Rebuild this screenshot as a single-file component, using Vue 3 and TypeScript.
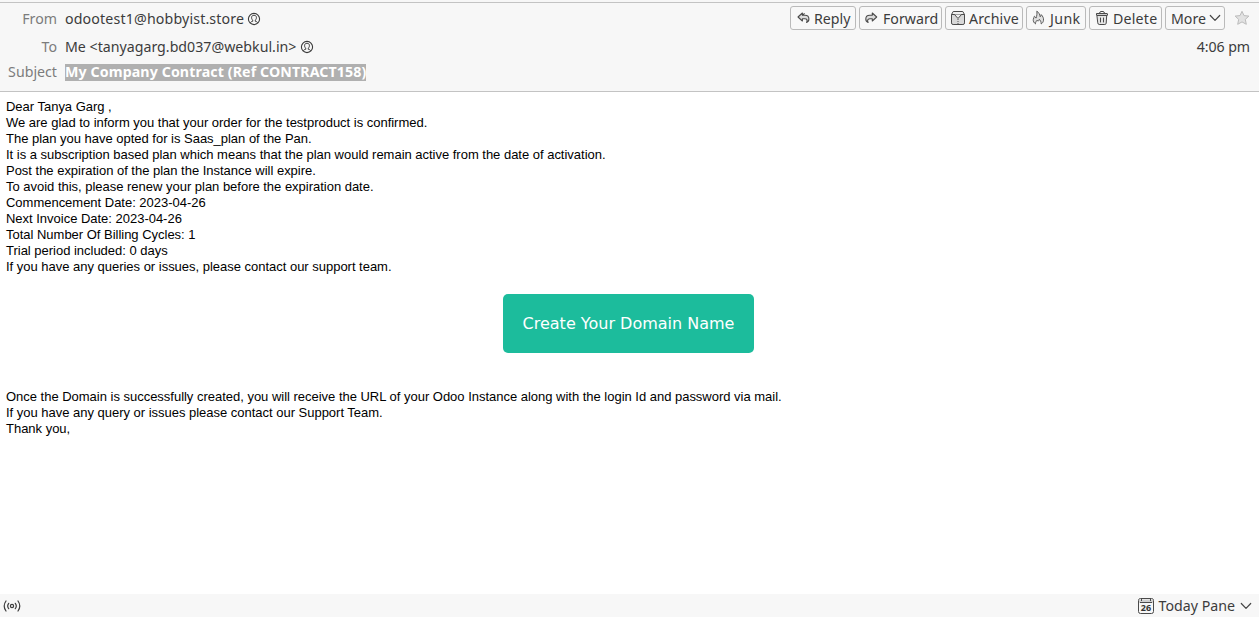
<script setup lang="ts">
interface Action {
  id: string
  label: string
}

const actions: Action[] = [
  { id: 'reply', label: 'Reply' },
  { id: 'forward', label: 'Forward' },
  { id: 'archive', label: 'Archive' },
  { id: 'junk', label: 'Junk' },
  { id: 'delete', label: 'Delete' },
  { id: 'more', label: 'More' },
]

const intro: string[] = [
  'Dear Tanya Garg ,',
  'We are glad to inform you that your order for the testproduct is confirmed.',
  'The plan you have opted for is Saas_plan of the Pan.',
  'It is a subscription based plan which means that the plan would remain active from the date of activation.',
  'Post the expiration of the plan the Instance will expire.',
  'To avoid this, please renew your plan before the expiration date.',
  'Commencement Date: 2023-04-26',
  'Next Invoice Date: 2023-04-26',
  'Total Number Of Billing Cycles: 1',
  'Trial period included: 0 days',
  'If you have any queries or issues, please contact our support team.',
]

const closing: string[] = [
  'Once the Domain is successfully created, you will receive the URL of your Odoo Instance along with the login Id and password via mail.',
  'If you have any query or issues please contact our Support Team.',
  'Thank you,',
]

const people = [
  { id: 'from', label: 'From', value: 'odootest1@hobbyist.store' },
  { id: 'to', label: 'To', value: 'Me <tanyagarg.bd037@webkul.in>' },
]
</script>

<template>
  <div class="window">
    <header class="head">
      <div class="fields">
        <div v-for="p in people" :key="p.id" class="field" :class="p.id">
          <span class="label">{{ p.label }}</span>
          <span class="value">{{ p.value }}</span>
          <svg class="contact" width="14" height="14" viewBox="0 0 14 14" fill="none" stroke="#3c3c3c">
            <circle cx="7" cy="7" r="5.6" stroke-width="1.1" />
            <path d="M3.400 10.800c.3-.9 1-1.300 2.300-1.500V8.100C4.800 7.300 4.500 6.300 4.600 5.300 4.700 3.900 5.600 3.300 7 3.300s2.300.6 2.400 2c.1 1-.2 2-1.100 2.800v1.200c1.300.2 2 .6 2.300 1.500" />
          </svg>
        </div>
        <div class="field subject">
          <span class="label">Subject</span>
          <span class="value">My Company Contract (Ref CONTRACT158)</span>
        </div>
      </div>
      <div class="side">
        <div class="toolbar">
          <button v-for="a in actions" :key="a.id" type="button" class="btn" :class="a.id">
            <svg v-if="a.id === 'reply'" class="ic" width="16" height="16" viewBox="0 0 16 16" fill="#dcdcdc" stroke="#4a4a4a" stroke-width="1.100" stroke-linejoin="round">
              <path d="M6.400 3 2 7l4.400 4V8.800h2.400c1.600 0 2.300.7 2.300 1.900 0 .6-.2 1-.5 1.700 1.600-.5 2.300-1.700 2.300-3.400C12.900 6.500 11.400 5.300 9 5.300H6.400zM6.200 5.500 8.600 3.300" />
            </svg>
            <svg v-else-if="a.id === 'forward'" class="ic" width="16" height="16" viewBox="0 0 16 16" fill="#dcdcdc" stroke="#4a4a4a" stroke-width="1.100" stroke-linejoin="round">
              <path d="M8.300 3l4.400 4-4.400 4V8.800H5.900c-1.600 0-2.300.7-2.300 1.900 0 .6.2 1 .5 1.700-1.600-.5-2.300-1.700-2.300-3.400 0-2.500 1.500-3.700 3.900-3.700h2.600z" />
            </svg>
            <svg v-else-if="a.id === 'archive'" class="ic" width="16" height="16" viewBox="0 0 16 16" fill="none" stroke="#4a4a4a" stroke-linejoin="round">
              <path d="M1.500 4.500v8.400q0 1.600 1.600 1.600h9.800q1.600 0 1.600-1.600V4.500z" fill="#d8d8d8" />
              <path d="M1.500 4.500 3.200 1.500h9.600l1.700 3z" fill="#efefef" />
              <path d="M4.500 4.500 8 8.500l3.500-4" fill="#efefef" />
              <path d="M8 9v5" stroke="#555" stroke-dasharray="1 1" />
            </svg>
            <svg v-else-if="a.id === 'junk'" class="ic" width="16" height="16" viewBox="0 0 16 16" fill="#dedede" stroke="#5c5c5c" stroke-linejoin="round">
              <path d="M4.500 13.900C2.900 12.800 2 11.200 2.300 9.400c.2-1.300.8-2.100 1.100-3.200.9.500 1.300 1.100 1.600 1.900.9-2 1.200-4.500.8-6.900 2 1.200 3.100 3.200 3.400 5.600.6-.5.9-1.200 1-2.200 1.600 1.600 2.600 3.700 2.300 5.700-.2 1.600-1 2.800-2.300 3.600 0-2.200-.8-3.500-1.900-4.600-.3 1-.6 1.400-1.200 1.900-.4-.4-.6-.7-.7-1.200-1.300 1.200-2 2.300-1.900 3.900z" />
            </svg>
            <svg v-else-if="a.id === 'delete'" class="ic" width="16" height="16" viewBox="0 0 16 16" fill="none" stroke="#4a4a4a" stroke-linejoin="round" stroke-linecap="round">
              <path d="M3.300 5.500h9.400l-.5 7.700q-.2 1.300-1.400 1.300H5.200q-1.200 0-1.400-1.300z" fill="#e4e4e4" />
              <path d="M3 3.500h10q.5 0 .5.500v1q0 .5-.5.500H3Q2.500 5.500 2.500 5V4q0-.5.500-.5z" fill="#ccc" />
              <path d="M5.500 3.300q0-1.800 1.500-1.800h2q1.500 0 1.500 1.800M6.500 8v4M9.500 8v4" />
            </svg>
            <span class="text">{{ a.label }}</span>
            <svg v-if="a.id === 'more'" class="chev" width="12" height="12" viewBox="0 0 12 12" fill="none" stroke="#444" stroke-width="1.200" stroke-linecap="round" stroke-linejoin="round">
              <path d="M1.300 3.500 6 8.300l4.700-4.800" />
            </svg>
          </button>
          <svg class="star" width="16" height="16" viewBox="0 0 16 16" fill="#e2e2e2" stroke="#bcbcbc" stroke-linejoin="round">
            <path d="M8 1.300l2 4.300 4.900.5-3.600 3.300 1 4.900L8 11.900l-4.300 2.400 1-4.900L1.100 6.100 6 5.600z" />
          </svg>
        </div>
        <span class="time">4:06 pm</span>
      </div>
    </header>

    <main class="body">
      <p v-for="line in intro" :key="line">{{ line }}</p>
      <div class="cta-row"><a class="cta">Create Your Domain Name</a></div>
      <p v-for="line in closing" :key="line">{{ line }}</p>
    </main>

    <footer class="status">
      <svg class="online" width="18" height="14" viewBox="0 0 18 14" fill="none" stroke="#3c3c3c" stroke-width="1.200" stroke-linecap="round">
        <circle cx="9" cy="7" r="1.600" />
        <path d="M5.700 4.300q-2 2.700 0 5.400M12.300 4.300q2 2.700 0 5.400M3 2q-3.600 5 0 10M15 2q3.600 5 0 10" />
      </svg>
      <div class="today">
        <svg width="16" height="16" viewBox="0 0 16 16" fill="none" stroke="#4a4a4a">
          <rect x=".5" y=".5" width="15" height="15" rx="2" fill="#f7f7f7" />
          <path d="M1 1.500h14V5H1z" fill="#d0d0d0" stroke="none" />
          <path d="M2 4.500h12M3.500 1v2M12.500 1v2" />
          <text x="8" y="13.300" text-anchor="middle" class="day">26</text>
        </svg>
        <span class="text">Today Pane</span>
        <svg class="chev" width="12" height="12" viewBox="0 0 12 12" fill="none" stroke="#444" stroke-width="1.200" stroke-linecap="round" stroke-linejoin="round">
          <path d="M1.300 3.500 6 8.300l4.700-4.800" />
        </svg>
      </div>
    </footer>
  </div>
</template>

<style>
body {
  margin: 0;
  background: #fff;
}
</style>

<style scoped>
.window {
  display: flex;
  flex-direction: column;
  height: 617px;
  overflow: hidden;
  box-sizing: border-box;
  border-top: 2px solid #f7f7f7;
  background: #fff;
  color: #3c3c3c;
  font-family: "Noto Sans", "Open Sans", sans-serif;
  font-size: 14.2px;
}

.head {
  display: flex;
  justify-content: space-between;
  height: 90px;
  flex: none;
  box-sizing: border-box;
  border-top: 1px solid #c3c3c3;
  border-bottom: 1px solid #c3c3c3;
  background: #f7f7f7;
}

.fields {
  padding-top: 3px;
}

.field {
  display: flex;
  align-items: center;
  line-height: 20px;
  white-space: nowrap;
}

.field.from { height: 26px; }
.field.to { height: 30px; }
.field.subject { height: 19px; }

.from .value { letter-spacing: 0.15px; }

.label {
  width: 57px;
  margin-right: 8px;
  text-align: right;
  color: #7c7c7c;
}

.contact {
  margin-left: 3px;
}

.to .contact {
  margin-left: 4px;
}

.subject .value {
  height: 17px;
  line-height: 16px;
  margin-top: 2px;
  background: #b0b0b0;
  color: #fff;
  font-weight: 700;
  letter-spacing: 0.11px;
}

.side {
  display: flex;
  flex-direction: column;
  align-items: flex-end;
}

.toolbar {
  display: flex;
  gap: 3px;
  padding: 3px 9px 0 0;
}

.btn {
  display: flex;
  align-items: center;
  box-sizing: border-box;
  height: 24px;
  padding: 0 0 0 5px;
  border: 1px solid #bababa;
  border-radius: 3px;
  background: #f8f8f8;
  color: #3c3c3c;
  font: inherit;
  white-space: nowrap;
}

.btn .ic {
  margin: 0 3px 0 -1px;
  flex: none;
}

.reply { width: 66px; }
.forward { width: 83px; }
.archive { width: 78px; }
.junk { width: 60px; letter-spacing: 0.4px; }
.delete { width: 73px; letter-spacing: 0.2px; }
.more { width: 60px; }

.reply .ic { margin: 0 2px 0 0; }
.archive .text { letter-spacing: 0.1px; }

.btn .chev {
  margin-left: 3px;
}

.star {
  margin: 4px 0 0 6px;
}

.time {
  padding: 7px 9px 0 0;
  line-height: 20px;
  letter-spacing: -0.1px;
}

.body {
  flex: 1;
  padding: 7px 6px 0;
  font: 13px/16px "Liberation Sans", Arial, sans-serif;
  letter-spacing: -0.016px;
  color: #000;
}

.body p {
  margin: 0;
}

.cta-row {
  display: flex;
  justify-content: center;
  margin: 19px 2px 36px 0;
}

.cta {
  width: 251px;
  height: 59px;
  border-radius: 5px;
  background: #1cbc9c;
  color: #fff;
  font: 16px/59px "DejaVu Sans", sans-serif;
  letter-spacing: 0;
  text-align: center;
}

.status {
  display: flex;
  justify-content: space-between;
  align-items: center;
  height: 23px;
  flex: none;
  padding: 0 7px 0 3px;
  background: #f7f7f7;
}

.today {
  display: flex;
  align-items: center;
  gap: 5px;
  line-height: 20px;
}

.day {
  font: 700 9px "Noto Sans", sans-serif;
  fill: #333;
  stroke: none;
}
</style>
